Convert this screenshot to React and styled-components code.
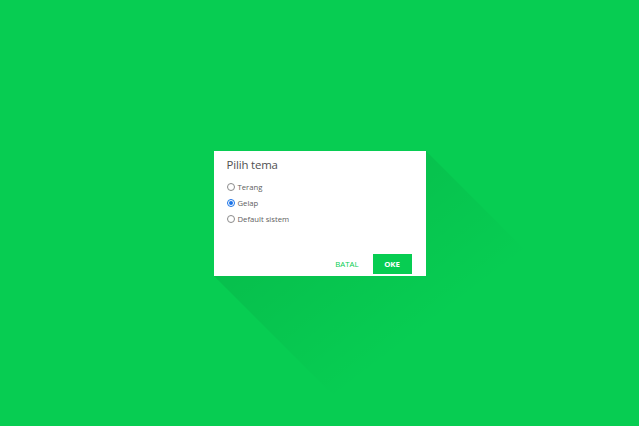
import React, { useState } from 'react';
import styled, { createGlobalStyle } from "styled-components";

const GlobalStyle = createGlobalStyle`
  html, body {
    margin: 0;
    padding: 0;
    height: 100%;
  }
  body {
    background: #07cd52;
    font-family: "Open Sans", "Liberation Sans", sans-serif;
  }
  #root {
    height: 100%;
  }
`

const Screen = styled.div`
  width: 100%;
  height: 100vh;
  display: flex;
  align-items: center;
  justify-content: center;
  overflow: hidden;
`

const Dialog = styled.div`
  position: relative;
  width: 212px;
  height: 125px;
  box-sizing: border-box;
  background: #fff;
  padding: 5px 14px 0 13px;
  display: flex;
  flex-direction: column;
`

// flat long shadow behind the dialog
const LongShadow = styled.svg`
  position: absolute;
  left: 0;
  top: 0;
  overflow: visible;
  z-index: -1;
`

const Title = styled.h2`
  margin: 0;
  font-size: 11.4px;
  line-height: 17px;
  font-weight: 400;
  color: #505050;
  letter-spacing: -0.15px;
`

const Options = styled.div`
  display: flex;
  flex-direction: column;
  gap: 5px;
  margin-top: 9px;
`

const Option = styled.label`
  display: flex;
  align-items: center;
  gap: 3px;
  font-size: 7.7px;
  color: #606060;
  height: 11px;
  cursor: pointer;
`

const Radio = styled.span`
  width: 8px;
  height: 8px;
  box-sizing: border-box;
  border-radius: 50%;
  border: 1px solid ${(props) => props.checked ? "#1a73e8" : "#8a8a8a"};
  display: flex;
  align-items: center;
  justify-content: center;
  &::after {
    content: "";
    width: 4px;
    height: 4px;
    border-radius: 50%;
    background: ${(props) => props.checked ? "#1a73e8" : "transparent"};
  }
`

const Actions = styled.div`
  margin-top: auto;
  margin-bottom: 2px;
  display: flex;
  justify-content: flex-end;
  align-items: center;
  gap: 14px;
`

const Button = styled.button`
  border: none;
  outline: none;
  cursor: pointer;
  font-family: inherit;
  text-transform: uppercase;
  font-size: 7.8px;
  font-weight: ${(props) => props.type === "filled" ? "700" : "400"};
  background: ${(props) => props.type === "filled" ? "#07cd52" : "transparent"};
  color: ${(props) => props.type === "filled" ? "#fff" : "#07cd52"};
  width: ${(props) => props.type === "filled" ? "39px" : "auto"};
  height: 20px;
  padding: 0;
`

const options = ["Terang", "Gelap", "Default sistem"];

const App = () => {
    const [theme, setTheme] = useState("Gelap");
    return (
        <Screen>
            <GlobalStyle/>
            <Dialog>
                <LongShadow width="212" height="125">
                    <defs>
                        <linearGradient id="ls" x1="0" y1="0" x2="1" y2="1">
                            <stop offset="0" stopColor="#000" stopOpacity="0.11"/>
                            <stop offset="0.6" stopColor="#000" stopOpacity="0"/>
                        </linearGradient>
                    </defs>
                    <polygon points="212,0 372,160 160,285 0,125" fill="url(#ls)"/>
                </LongShadow>
                <Title>Pilih tema</Title>
                <Options>
                    {options.map((o) => (
                        <Option key={o} onClick={() => setTheme(o)}>
                            <Radio checked={theme === o}/>
                            {o}
                        </Option>
                    ))}
                </Options>
                <Actions>
                    <Button>batal</Button>
                    <Button type="filled">oke</Button>
                </Actions>
            </Dialog>
        </Screen>
    );
};

export default App;
